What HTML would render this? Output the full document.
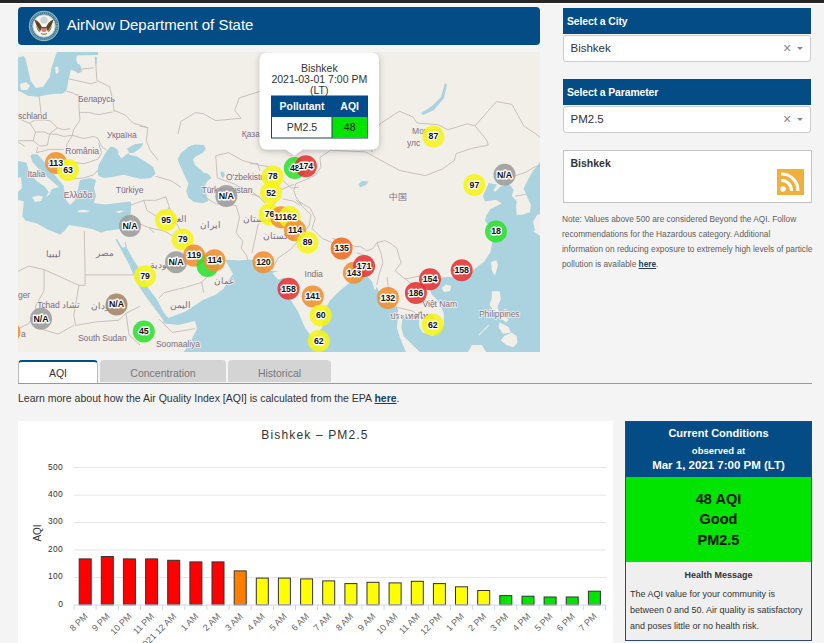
<!DOCTYPE html>
<html><head><meta charset="utf-8">
<style>
*{box-sizing:border-box;margin:0;padding:0}
html,body{width:824px;height:643px;overflow:hidden;background:#f4f4f4;font-family:"Liberation Sans",sans-serif;color:#333;position:relative}
.abs{position:absolute}
#topbar{left:0;top:0;width:824px;height:3px;background:#262626;border-bottom:1px solid #fff;box-sizing:content-box}
#hdr{left:18px;top:7px;width:522px;height:38px;background:#034c86;border-radius:4px}
#hdr .t{position:absolute;left:48.7px;top:9px;font-size:15px;line-height:17px;color:#fff;white-space:nowrap}
#map{left:18px;top:52px;width:522px;height:300px;overflow:hidden;background:#f2efe9}
.sh{left:563px;width:248px;height:26px;background:#034c86;color:#fff;font-weight:bold;font-size:10.4px;line-height:28px;padding-left:4px;letter-spacing:-0.1px}
.sel{left:563px;width:248px;height:27px;background:#fff;border:1px solid #ccc;border-radius:3px;font-size:11.5px;line-height:25px;padding-left:6.5px;color:#333}
.sel .x{position:absolute;left:219px;top:0;font-size:14px;color:#888;line-height:24px}
.sel .ar{position:absolute;left:232.5px;top:11px;width:0;height:0;border-left:3.5px solid transparent;border-right:3.5px solid transparent;border-top:3.5px solid #888}
#note{left:563px;top:149.5px;width:249px;height:53.5px;background:#fff;border:1px solid #c4c4c4}
#note b{position:absolute;left:6.5px;top:6.5px;font-size:10.5px;color:#333}
#rss{position:absolute;left:213px;top:18px;width:27px;height:26px;background:#efb03e}
#notetxt{left:562px;top:212px;width:270px;white-space:nowrap;font-size:8.3px;line-height:15px;color:#606060}
#notetxt a{color:#1d3f63;font-weight:bold;text-decoration:underline}
.tab{top:360px;height:24px;font-size:10.5px;line-height:24px;text-align:center;border-radius:4px 4px 0 0}
#t1{left:18px;width:80px;background:#fff;border:1px solid #bbb;border-top:2px solid #034c86;border-bottom:none;color:#333;line-height:23px}
#t2{left:100px;width:126px;height:22px;line-height:26px;background:#d4d4d4;color:#777}
#t3{left:228px;width:103px;height:22px;line-height:26px;background:#d4d4d4;color:#777}
#tabline{left:18px;top:383px;width:794px;height:1px;background:#999}
#learn{left:18px;top:392px;font-size:10.5px;line-height:12px;color:#333;white-space:nowrap}
#learn a{color:#1d3f63;font-weight:bold;text-decoration:underline}
#chart{left:18px;top:421px;width:595px;height:222px;background:#fff}
#cc{left:625px;top:421px;width:187px;height:220px;border:1px solid #2a4a6e;background:#efefef}
#cch{position:absolute;left:0;top:0;width:185px;height:55px;background:#034c86;color:#fff;font-weight:bold;text-align:center}
#ccg{position:absolute;left:0;top:55px;width:185px;height:85px;background:#00e400;color:#111;font-weight:bold;text-align:center;font-size:14.5px;line-height:20.6px;padding-top:11.8px}
#ccm{position:absolute;left:0;top:140px;width:185px;height:80px;color:#333}
</style></head><body>
<div id="topbar" class="abs"></div>
<div id="hdr" class="abs">
 <svg class="abs" style="left:10px;top:3px" width="32" height="32" viewBox="0 0 32 32">
  <circle cx="16" cy="16" r="14.6" fill="#46769a" stroke="#86bdb6" stroke-width="1.1"/>
  <circle cx="16" cy="16" r="13" fill="none" stroke="#a9c6d2" stroke-width="1.3" stroke-dasharray="0.9 1.1" opacity="0.75"/>
  <circle cx="16" cy="16" r="11.3" fill="#f4f3ec" stroke="#9ccbc2" stroke-width="0.8"/>
  <circle cx="16" cy="10.2" r="3.6" fill="#c9d3d3"/>
  <path d="M6.5 9.5 Q9 10 11.5 13 L14 17 L12.5 21 Q8.5 17.5 6.5 9.5Z M25.5 9.5 Q23 10 20.5 13 L18 17 L19.5 21 Q23.5 17.5 25.5 9.5Z" fill="#5f4324"/>
  <path d="M8 15 Q9.5 19 12.5 21 L11 22 Q8.5 19.5 8 15Z M24 15 Q22.5 19 19.5 21 L21 22 Q23.5 19.5 24 15Z" fill="#7a8048"/>
  <circle cx="16" cy="15" r="1.5" fill="#fff"/>
  <path d="M13.4 17 h5.2 v3.6 q-2.6 3.2 -5.2 0z" fill="#d9777a"/>
  <path d="M13.4 17 h5.2 v1.2 h-5.2z" fill="#3c4f7c"/>
  <path d="M13 23.5 Q16 25.5 19 23.5" stroke="#8a6a3a" stroke-width="1" fill="none"/>
 </svg>
 <div class="t">AirNow Department of State</div>
</div>
<div id="map" class="abs"><svg width="522" height="300" viewBox="18 52 522 300" style="display:block">
<rect x="18" y="52" width="522" height="300" fill="#f2efe9"/>
<polygon points="18.0,57.8 23.8,55.9 25.8,59.8 29.6,76.3 30.6,81.1 36.0,88.0 43.2,86.7 49.6,77.2 51.5,67.8 56.8,52.0 98.0,52.0 98.0,55.0 77.0,55.5 76.0,60.0 78.0,64.0 80.1,64.6 82.0,71.4 78.2,73.4 75.3,71.4 71.0,69.5 68.5,79.2 67.5,86.0 66.5,90.8 62.7,93.7 56.8,93.7 47.1,94.7 37.4,96.7 27.7,95.7 22.9,92.8 18.0,90.8" fill="#aad3df"/>
<polygon points="95.5,57.8 97.0,57.0 96.8,64.0 95.6,64.0" fill="#aad3df"/>
<polygon points="18.0,161.0 26.4,162.6 29.2,172.4 36.2,180.8 44.6,186.4 48.8,192.0 46.0,197.0 49.0,195.0 52.0,189.0 59.0,187.0 63.0,186.0 65.0,192.0 66.0,200.0 70.0,205.0 75.0,200.0 77.0,193.0 80.0,180.0 90.0,178.0 96.0,180.0 94.0,188.0 96.0,196.0 93.7,203.1 105.4,204.6 117.0,203.1 130.1,201.6 131.3,202.7 130.5,216.4 124.5,222.4 118.5,229.2 105.7,231.0 101.4,232.7 92.8,229.2 84.3,227.5 69.0,225.0 64.6,230.8 60.2,234.4 47.1,229.3 36.9,223.5 25.3,220.6 22.4,216.2 23.8,201.6 18.0,200.0" fill="#aad3df"/>
<polygon points="32.0,154.2 37.6,154.2 46.0,164.0 57.2,178.0 64.2,186.4 61.4,189.2 51.6,180.8 40.4,171.0 32.0,161.2 30.6,155.6" fill="#aad3df"/>
<polygon points="97.5,171.5 98.6,165.0 101.8,159.5 106.2,151.8 110.6,146.4 115.0,147.5 118.2,150.8 118.2,154.0 121.5,158.4 125.9,155.1 128.1,152.9 130.2,155.1 136.8,156.2 145.5,161.7 153.2,167.1 155.4,173.7 151.0,178.1 141.2,179.1 132.4,177.0 123.7,174.8 112.8,177.0 104.0,178.1 98.6,175.9" fill="#aad3df"/>
<polygon points="127.0,148.6 134.6,144.2 143.3,143.1 141.2,147.5 133.5,152.9 129.1,152.9" fill="#aad3df"/>
<polygon points="188.5,146.5 195.0,144.4 203.8,144.9 205.9,148.7 202.7,153.1 196.1,156.3 192.9,159.6 195.0,165.0 200.5,169.4 203.8,172.7 208.1,173.8 211.4,178.1 207.0,181.4 204.8,185.7 205.9,192.3 208.1,201.0 202.7,203.2 194.0,202.1 188.5,197.7 186.3,191.2 188.5,183.6 184.2,174.8 180.9,167.2 177.6,159.6 180.9,153.1 185.2,149.8" fill="#aad3df"/>
<polygon points="120.3,248.3 126.2,246.8 133.6,260.1 142.5,273.4 148.4,288.2 157.3,300.0 163.2,311.8 169.1,319.2 175.0,320.7 175.0,324.0 164.7,323.6 161.7,317.7 152.8,305.9 144.0,294.1 136.6,282.3 129.2,264.5" fill="#aad3df"/>
<polygon points="115.5,239.5 117.0,239.0 122.5,248.0 120.3,248.3" fill="#aad3df"/>
<polygon points="124.6,242.0 125.6,242.0 127.0,247.0 125.8,247.5" fill="#aad3df"/>
<polygon points="186.0,243.0 192.0,246.0 200.0,251.0 210.0,254.0 218.0,256.0 224.0,259.0 222.0,262.0 214.0,263.0 206.0,265.0 199.0,261.0 193.0,255.0 188.0,249.0" fill="#aad3df"/>
<polygon points="162.8,323.0 178.0,324.9 195.0,321.1 197.0,328.7 189.3,343.9 183.7,352.0 540.0,352.0 540.0,162.0 536.0,167.4 533.5,169.9 528.6,178.6 523.6,188.6 527.3,197.3 531.0,204.7 529.8,212.2 522.3,214.7 516.7,214.7 516.1,207.2 516.7,201.0 511.8,196.0 513.6,189.8 508.7,183.6 500.0,187.0 495.0,192.0 493.5,190.0 497.0,184.5 488.7,183.0 483.0,196.0 484.9,201.6 496.1,199.7 501.7,203.5 490.5,209.0 486.8,214.7 484.9,220.3 488.7,225.9 492.4,240.8 490.5,252.0 484.0,261.8 475.3,268.3 471.0,273.0 460.0,279.0 451.4,277.0 446.0,277.0 440.5,278.0 432.0,283.0 429.6,290.0 431.8,294.4 438.3,301.0 443.9,313.6 443.9,324.8 441.6,328.1 432.7,336.0 422.6,332.6 419.3,327.0 419.0,318.0 410.0,318.0 402.5,318.0 401.3,327.0 403.6,336.0 412.5,344.9 420.0,352.0 406.0,352.0 400.2,338.2 396.9,328.1 398.0,317.0 396.9,306.9 384.0,302.0 376.7,286.7 374.8,290.7 372.0,281.2 366.2,275.5 356.8,277.4 349.2,283.1 339.7,290.7 330.2,300.2 324.5,309.7 322.6,326.8 315.0,336.5 311.2,336.2 305.5,328.7 298.0,311.6 288.5,296.4 284.0,286.0 284.7,277.4 278.3,279.8 272.4,273.0 278.3,271.0 274.4,271.0 266.0,270.0 258.0,262.0 252.0,259.4 239.4,260.4 224.9,259.4 233.0,273.7 229.2,279.3 223.5,288.8 215.9,294.5 202.6,300.2 185.5,311.6 164.7,319.2" fill="#aad3df"/>
<polygon points="358.5,184.0 362.0,181.0 368.7,181.5 366.0,185.0 360.0,187.6" fill="#aad3df"/>
<polygon points="220.5,172.0 223.0,171.5 225.0,175.0 223.0,177.9 221.0,176.0" fill="#aad3df"/>
<polygon points="306.0,166.0 311.0,165.0 312.0,167.0 307.0,168.0" fill="#aad3df"/>
<polygon points="445.0,83.0 447.0,85.0 444.0,98.0 434.0,110.0 423.0,115.0 421.0,113.0 432.0,106.0 441.0,97.0" fill="#aad3df"/>
<polygon points="20.0,84.0 26.0,82.0 30.0,86.0 27.0,90.0 21.0,90.0" fill="#f2efe9"/>
<polygon points="55.0,67.0 58.0,66.6 58.8,72.0 56.0,74.3" fill="#f2efe9"/>
<polygon points="32.0,197.0 38.0,195.5 43.0,196.5 41.0,201.0 35.0,202.0" fill="#f2efe9"/>
<polygon points="77.7,210.5 84.0,209.7 90.8,211.0 84.0,212.6 78.0,212.0" fill="#f2efe9"/>
<polygon points="115.6,211.5 121.0,210.4 124.3,211.0 119.0,213.3" fill="#f2efe9"/>
<polygon points="18.0,178.0 21.0,177.0 22.0,188.0 18.0,192.0" fill="#f2efe9"/>
<polygon points="491.0,262.0 496.5,260.3 498.0,265.0 495.0,275.4 492.0,271.0" fill="#f2efe9"/>
<polygon points="491.8,291.2 499.7,291.2 500.8,299.1 497.4,306.9 499.7,313.6 504.1,317.0 508.6,319.2 506.4,322.6 497.4,315.9 492.9,310.3 489.6,304.7 491.8,298.0" fill="#f2efe9"/>
<polygon points="499.7,322.6 508.6,327.1 510.9,332.7 503.0,333.8 498.5,327.1" fill="#f2efe9"/>
<polygon points="504.1,336.0 512.0,332.7 516.5,336.0 517.6,342.8 513.1,347.2 506.4,345.0 500.8,340.5" fill="#f2efe9"/>
<polygon points="488.4,324.8 478.4,334.9 479.2,335.6 489.0,325.6" fill="#f2efe9"/>
<polygon points="468.0,352.0 472.0,345.0 481.7,345.0 486.2,352.0" fill="#f2efe9"/>
<polygon points="441.6,288.0 446.0,284.6 451.4,286.0 450.0,291.0 444.0,292.2" fill="#f2efe9"/>
<polygon points="316.0,337.0 320.0,336.0 323.0,342.0 321.0,348.0 317.0,346.0" fill="#f2efe9"/>
<polygon points="533.0,222.0 537.0,215.0 540.0,214.0 540.0,232.0 535.0,230.0" fill="#f2efe9"/>
<polygon points="533.0,231.0 540.0,229.0 540.0,236.0" fill="#f2efe9"/>
<g fill="none" stroke="#c3baba" stroke-width="0.9" stroke-linejoin="round">
<polyline points="329.7,150.9 319.9,157.5 321.0,167.3 315.5,175.0 306.8,179.3 295.9,183.7 293.7,190.2 295.9,196.8 301.3,204.4"/>
<polyline points="250.0,163.9 257.6,163.5 259.8,170.6"/>
<polyline points="282.8,180.4 291.5,188.1 299.1,187.0"/>
<polyline points="282.8,199.0 293.7,201.2 300.2,205.5"/>
<polyline points="250.0,190.2 258.7,196.8 265.3,203.3"/>
<polyline points="300.0,202.1 310.1,208.2 315.2,218.3 312.1,228.4 322.2,238.5 332.4,242.6"/>
<polyline points="332.4,238.5 342.5,240.6 354.6,246.6 360.7,246.6"/>
<polyline points="360.7,246.6 366.7,250.7 372.8,248.7 376.9,242.6 385.0,240.6 391.0,243.6 397.1,248.7 399.1,256.7 401.1,262.8 395.1,270.9 405.2,279.0"/>
<polyline points="356.6,252.7 368.8,256.7 374.8,264.8 372.8,272.9"/>
<polyline points="376.9,242.6 380.9,252.7 382.9,262.8 378.9,274.9 376.9,285.1"/>
<polyline points="387.0,277.0 389.0,293.2 395.1,303.3 398.0,312.0"/>
<polyline points="405.2,279.0 413.3,285.1 421.4,295.2 429.4,307.3"/>
<polyline points="397.1,307.3 413.3,311.3 420.0,318.0"/>
<polyline points="405.2,279.0 420.0,276.0 432.0,283.0"/>
<polyline points="35.4,313.2 28.5,323.7 18.0,328.9"/>
<polyline points="37.0,320.0 40.7,328.9 58.1,334.1 73.8,325.4"/>
<polyline points="130.0,205.4 143.7,200.3 155.7,200.3 165.9,196.8"/>
<polyline points="165.9,196.8 169.3,207.1 174.5,219.1 179.6,229.3 183.0,234.5 188.0,243.0"/>
<polyline points="143.7,200.3 147.1,210.5 160.8,219.1 169.3,207.1"/>
<polyline points="131.0,214.0 140.3,224.2 148.8,227.6 154.0,232.8"/>
<polyline points="148.8,227.6 164.2,231.1 176.2,237.9 186.0,243.0"/>
<polyline points="201.8,195.1 215.5,203.7 236.1,205.4"/>
<polyline points="236.1,205.4 239.5,217.4 236.1,232.8 242.9,241.3 241.2,248.2"/>
<polyline points="241.2,248.2 246.3,255.0 248.0,260.1"/>
<polyline points="159.0,298.0 164.2,292.6 184.7,287.5 201.8,282.4"/>
<polyline points="201.8,282.4 203.6,292.6"/>
<polyline points="201.8,282.4 212.1,272.1 218.0,262.0"/>
<polyline points="38.7,95.0 39.8,101.5 40.9,113.5 45.2,120.0"/>
<polyline points="30.0,123.3 34.3,120.0 45.2,120.0 50.7,121.1 57.2,127.7 63.7,129.8 70.2,128.7"/>
<polyline points="30.0,123.3 35.4,132.0 44.1,132.0 49.6,134.2 57.2,127.7"/>
<polyline points="49.6,134.2 56.1,134.2 63.7,136.4 72.4,135.3"/>
<polyline points="76.4,94.6 79.0,95.0 79.0,108.1 80.0,120.0 73.5,129.8 72.4,135.3"/>
<polyline points="79.0,112.4 88.7,112.4 98.0,114.6 112.7,112.0"/>
<polyline points="72.4,135.3 67.0,144.0 65.9,151.6"/>
<polyline points="72.4,135.3 83.3,138.5 94.2,136.4 98.0,138.5 101.6,146.7 106.4,149.8"/>
<polyline points="18.0,140.7 33.2,140.7 39.8,146.2 47.4,145.1 49.6,134.2"/>
<polyline points="33.2,140.7 35.4,132.0"/>
<polyline points="37.6,147.2 36.5,152.7 49.6,149.4 63.7,149.4"/>
<polyline points="18.0,141.8 24.5,146.2"/>
<polyline points="18.0,118.0 24.0,121.0 30.0,123.3"/>
<polyline points="66.9,91.4 73.2,93.0 78.0,96.2"/>
<polyline points="68.5,78.8 90.6,83.6 96.9,82.0"/>
<polyline points="78.0,69.4 93.7,67.8"/>
<polyline points="95.3,56.7 96.9,80.4 109.5,86.7"/>
<polyline points="109.5,86.7 112.7,99.3 114.2,112.0"/>
<polyline points="114.2,110.4 125.3,115.1 133.2,123.0 148.0,127.7"/>
<polyline points="98.5,143.2 101.6,152.6 98.5,158.9 84.3,163.7 70.0,162.1 60.0,168.0"/>
<polyline points="65.3,179.4 84.3,177.9 93.7,174.7 98.0,170.0"/>
<polyline points="177.9,134.0 181.0,121.4 195.2,112.7 203.1,113.5 215.7,120.6 233.1,119.0 241.0,118.3 234.7,110.4 239.4,97.8 259.9,91.4"/>
<polyline points="140.0,126.2 147.9,127.7 146.3,140.4 150.0,150.0 158.0,160.0"/>
<polyline points="215.7,155.8 228.4,152.6 242.6,160.5 259.9,165.2 270.0,166.8"/>
<polyline points="215.7,155.8 217.3,177.9"/>
<polyline points="217.3,177.9 234.7,184.2 250.4,193.6 259.9,196.8"/>
<polyline points="155.8,176.3 171.6,181.0 181.0,187.3"/>
<polyline points="84.3,231.0 85.1,274.9"/>
<polyline points="85.1,274.9 133.0,274.9"/>
<polyline points="85.1,274.9 85.1,285.3 79.0,285.3 73.8,314.9 75.5,325.4"/>
<polyline points="79.0,285.3 44.1,269.6 28.5,266.1 18.0,271.4"/>
<polyline points="44.1,269.6 44.1,290.5 35.4,306.2 37.0,320.0"/>
<polyline points="75.5,325.4 96.4,321.9 119.1,320.2 126.0,313.2 140.0,306.2"/>
<polyline points="126.0,313.2 129.0,335.0 140.0,345.0"/>
<polyline points="159.0,319.2 172.3,332.5 195.0,328.7"/>
<polyline points="329.7,150.2 365.3,151.9 387.4,163.8 400.0,170.6"/>
<polyline points="260.0,179.1 282.1,189.3 294.0,184.2"/>
<polyline points="277.0,189.3 275.3,202.9 265.1,214.8 258.0,225.0 252.0,252.8"/>
<polyline points="295.7,199.5 311.0,214.8 309.3,225.0 299.1,240.0 290.0,250.0 278.0,258.0 272.0,270.0"/>
<polyline points="380.0,123.8 399.4,111.2 413.0,117.0 416.9,122.9 438.3,124.8 448.0,129.7 467.4,123.8 475.1,125.8 488.7,110.3 496.5,101.5 512.0,104.4 523.7,125.8 535.3,133.6 540.0,137.4"/>
<polyline points="380.0,123.8 370.0,140.0 372.0,152.0"/>
<polyline points="400.0,170.6 425.5,175.7 442.5,168.9 454.4,160.4 456.1,153.6 471.4,148.5 488.3,145.1 486.6,140.0 475.1,125.8"/>
<polyline points="510.4,177.4 525.7,172.3 534.2,167.2 540.0,165.5"/>
<polyline points="515.5,196.1 525.7,194.4"/>
</g>
<g font-family="Liberation Sans" font-size="8.5" fill="#7b6d84" letter-spacing="-0.05" stroke="#f2efe9" stroke-width="1.6" paint-order="stroke">
<text x="78" y="101.9">Беларусь</text>
<text x="18" y="118.6">schland</text>
<text x="107" y="138.2">Україна</text>
<text x="65.3" y="153.6">România</text>
<text x="27.5" y="176.6">Italia</text>
<text x="63.8" y="197.8">Ελλάδα</text>
<text x="115.8" y="193.1">Türkiye</text>
<text x="226" y="179.6">O'zbekiston</text>
<text x="201.5" y="193.1">Türkmenistan</text>
<text x="162" y="222.3">العراق</text>
<text x="200" y="227.8">ایران</text>
<text x="242.6" y="221.5">افغانستان</text>
<text x="45.9" y="257.4">ليبيا</text>
<text x="96.4" y="255.6">مصر</text>
<text x="18" y="298.4">ger</text>
<text x="21" y="336.6">a</text>
<text x="37.2" y="308.0">Tchad تشاد</text>
<text x="91.2" y="308.8">السودان</text>
<text x="78" y="341.1">South Sudan</text>
<text x="150.4" y="267.7">السعودية</text>
<text x="214" y="283.8">عمان</text>
<text x="170.4" y="307.6">اليمن</text>
<text x="156" y="347.4">Soomaaliya</text>
<text x="389" y="200.4">中国</text>
<text x="263.4" y="238.6">پاکستان</text>
<text x="304.6" y="276.6">India</text>
<text x="422.6" y="306.6">Việt Nam</text>
<text x="390" y="319.0">ประเทศไทย</text>
<text x="479" y="317.4">Philippines</text>
<text x="412" y="134.2">Монгол</text>
<text x="407" y="145.9">улс</text>
<text x="241.8" y="137.4">Қаза</text>
</g>
<g font-family="Liberation Sans" font-weight="bold" font-size="9.8" letter-spacing="-0.1" text-anchor="middle">
<circle cx="9.5" cy="332" r="11" fill="#f09030" fill-opacity="0.88"/>
<circle cx="41" cy="318.7" r="11" fill="#9c9c9c" fill-opacity="0.88"/>
<circle cx="116.5" cy="304.5" r="11" fill="#a48466" fill-opacity="0.88"/>
<circle cx="143.8" cy="331.5" r="11" fill="#2fe02f" fill-opacity="0.88"/>
<circle cx="145" cy="276.3" r="11" fill="#f5f514" fill-opacity="0.88"/>
<circle cx="56" cy="163" r="11" fill="#f09030" fill-opacity="0.88"/>
<circle cx="68" cy="170" r="11" fill="#f5f514" fill-opacity="0.88"/>
<circle cx="130" cy="226" r="11" fill="#9c9c9c" fill-opacity="0.88"/>
<circle cx="166" cy="220" r="11" fill="#f5f514" fill-opacity="0.88"/>
<circle cx="182.7" cy="239.5" r="11" fill="#f5f514" fill-opacity="0.88"/>
<circle cx="176" cy="262.3" r="11" fill="#9c9c9c" fill-opacity="0.88"/>
<circle cx="194.1" cy="255.6" r="11" fill="#f09030" fill-opacity="0.88"/>
<circle cx="207.6" cy="266" r="11" fill="#2fe02f" fill-opacity="0.88"/>
<circle cx="214.5" cy="260.2" r="11" fill="#f09030" fill-opacity="0.88"/>
<circle cx="226.3" cy="196" r="11" fill="#9c9c9c" fill-opacity="0.88"/>
<circle cx="263.4" cy="262.3" r="11" fill="#f09030" fill-opacity="0.88"/>
<circle cx="272.7" cy="176.5" r="11" fill="#f5f514" fill-opacity="0.88"/>
<circle cx="271" cy="192.7" r="11" fill="#f5f514" fill-opacity="0.88"/>
<circle cx="269.5" cy="214.5" r="11" fill="#f5f514" fill-opacity="0.88"/>
<circle cx="281.2" cy="217.3" r="11" fill="#f09030" fill-opacity="0.88"/>
<circle cx="289.5" cy="217" r="11" fill="#f5f514" fill-opacity="0.88"/>
<circle cx="295" cy="230.3" r="11" fill="#f09030" fill-opacity="0.88"/>
<circle cx="307.5" cy="242.5" r="11" fill="#f5f514" fill-opacity="0.88"/>
<circle cx="294.8" cy="168" r="11" fill="#2fe02f" fill-opacity="0.88"/>
<circle cx="305.9" cy="166.3" r="11" fill="#e63232" fill-opacity="0.88"/>
<circle cx="341.6" cy="248.4" r="11" fill="#f26a1a" fill-opacity="0.88"/>
<circle cx="353.9" cy="272.7" r="11" fill="#f09030" fill-opacity="0.88"/>
<circle cx="364" cy="266" r="11" fill="#e63232" fill-opacity="0.88"/>
<circle cx="288.5" cy="288.8" r="11" fill="#e63232" fill-opacity="0.88"/>
<circle cx="312.7" cy="296.4" r="11" fill="#f09030" fill-opacity="0.88"/>
<circle cx="320.7" cy="315.4" r="11" fill="#f5f514" fill-opacity="0.88"/>
<circle cx="318.8" cy="341" r="11" fill="#f5f514" fill-opacity="0.88"/>
<circle cx="387.9" cy="297.9" r="11" fill="#f09030" fill-opacity="0.88"/>
<circle cx="415.9" cy="292.9" r="11" fill="#e63232" fill-opacity="0.88"/>
<circle cx="430" cy="279.3" r="11" fill="#e63232" fill-opacity="0.88"/>
<circle cx="432.7" cy="324.8" r="11" fill="#f5f514" fill-opacity="0.88"/>
<circle cx="461.7" cy="270.2" r="11" fill="#e63232" fill-opacity="0.88"/>
<circle cx="474.4" cy="185" r="11" fill="#f5f514" fill-opacity="0.88"/>
<circle cx="504.5" cy="174.8" r="11" fill="#9c9c9c" fill-opacity="0.88"/>
<circle cx="496" cy="231.5" r="11" fill="#2fe02f" fill-opacity="0.88"/>
<circle cx="433.4" cy="136.5" r="11" fill="#f5f514" fill-opacity="0.88"/>
<text transform="translate(41 321.5) scale(0.9 1)" fill="#111" stroke="#fff" stroke-width="2.8" stroke-linejoin="round" paint-order="stroke">N/A</text>
<text transform="translate(116.5 307.3) scale(0.9 1)" fill="#111" stroke="#fff" stroke-width="2.8" stroke-linejoin="round" paint-order="stroke">N/A</text>
<text transform="translate(143.8 334.3) scale(0.9 1)" fill="#111" stroke="#fff" stroke-width="2.8" stroke-linejoin="round" paint-order="stroke">45</text>
<text transform="translate(145 279.1) scale(0.9 1)" fill="#111" stroke="#fff" stroke-width="2.8" stroke-linejoin="round" paint-order="stroke">79</text>
<text transform="translate(56 165.8) scale(0.9 1)" fill="#111" stroke="#fff" stroke-width="2.8" stroke-linejoin="round" paint-order="stroke">113</text>
<text transform="translate(68 172.8) scale(0.9 1)" fill="#111" stroke="#fff" stroke-width="2.8" stroke-linejoin="round" paint-order="stroke">63</text>
<text transform="translate(130 228.8) scale(0.9 1)" fill="#111" stroke="#fff" stroke-width="2.8" stroke-linejoin="round" paint-order="stroke">N/A</text>
<text transform="translate(166 222.8) scale(0.9 1)" fill="#111" stroke="#fff" stroke-width="2.8" stroke-linejoin="round" paint-order="stroke">95</text>
<text transform="translate(182.7 242.3) scale(0.9 1)" fill="#111" stroke="#fff" stroke-width="2.8" stroke-linejoin="round" paint-order="stroke">79</text>
<text transform="translate(176 265.1) scale(0.9 1)" fill="#111" stroke="#fff" stroke-width="2.8" stroke-linejoin="round" paint-order="stroke">N/A</text>
<text transform="translate(194.1 258.4) scale(0.9 1)" fill="#111" stroke="#fff" stroke-width="2.8" stroke-linejoin="round" paint-order="stroke">119</text>
<text transform="translate(214.5 263.0) scale(0.9 1)" fill="#111" stroke="#fff" stroke-width="2.8" stroke-linejoin="round" paint-order="stroke">114</text>
<text transform="translate(226.3 198.8) scale(0.9 1)" fill="#111" stroke="#fff" stroke-width="2.8" stroke-linejoin="round" paint-order="stroke">N/A</text>
<text transform="translate(263.4 265.1) scale(0.9 1)" fill="#111" stroke="#fff" stroke-width="2.8" stroke-linejoin="round" paint-order="stroke">120</text>
<text transform="translate(272.7 179.3) scale(0.9 1)" fill="#111" stroke="#fff" stroke-width="2.8" stroke-linejoin="round" paint-order="stroke">78</text>
<text transform="translate(271 195.5) scale(0.9 1)" fill="#111" stroke="#fff" stroke-width="2.8" stroke-linejoin="round" paint-order="stroke">52</text>
<text transform="translate(269.5 217.3) scale(0.9 1)" fill="#111" stroke="#fff" stroke-width="2.8" stroke-linejoin="round" paint-order="stroke">76</text>
<text transform="translate(281.2 220.1) scale(0.9 1)" fill="#111" stroke="#fff" stroke-width="2.8" stroke-linejoin="round" paint-order="stroke">116</text>
<text transform="translate(289.5 219.8) scale(0.9 1)" fill="#111" stroke="#fff" stroke-width="2.8" stroke-linejoin="round" paint-order="stroke">162</text>
<text transform="translate(295 233.1) scale(0.9 1)" fill="#111" stroke="#fff" stroke-width="2.8" stroke-linejoin="round" paint-order="stroke">114</text>
<text transform="translate(307.5 245.3) scale(0.9 1)" fill="#111" stroke="#fff" stroke-width="2.8" stroke-linejoin="round" paint-order="stroke">89</text>
<text transform="translate(294.8 170.8) scale(0.9 1)" fill="#111" stroke="#fff" stroke-width="2.8" stroke-linejoin="round" paint-order="stroke">48</text>
<text transform="translate(305.9 169.1) scale(0.9 1)" fill="#111" stroke="#fff" stroke-width="2.8" stroke-linejoin="round" paint-order="stroke">174</text>
<text transform="translate(341.6 251.2) scale(0.9 1)" fill="#111" stroke="#fff" stroke-width="2.8" stroke-linejoin="round" paint-order="stroke">135</text>
<text transform="translate(353.9 275.5) scale(0.9 1)" fill="#111" stroke="#fff" stroke-width="2.8" stroke-linejoin="round" paint-order="stroke">143</text>
<text transform="translate(364 268.8) scale(0.9 1)" fill="#111" stroke="#fff" stroke-width="2.8" stroke-linejoin="round" paint-order="stroke">171</text>
<text transform="translate(288.5 291.6) scale(0.9 1)" fill="#111" stroke="#fff" stroke-width="2.8" stroke-linejoin="round" paint-order="stroke">158</text>
<text transform="translate(312.7 299.2) scale(0.9 1)" fill="#111" stroke="#fff" stroke-width="2.8" stroke-linejoin="round" paint-order="stroke">141</text>
<text transform="translate(320.7 318.2) scale(0.9 1)" fill="#111" stroke="#fff" stroke-width="2.8" stroke-linejoin="round" paint-order="stroke">60</text>
<text transform="translate(318.8 343.8) scale(0.9 1)" fill="#111" stroke="#fff" stroke-width="2.8" stroke-linejoin="round" paint-order="stroke">62</text>
<text transform="translate(387.9 300.7) scale(0.9 1)" fill="#111" stroke="#fff" stroke-width="2.8" stroke-linejoin="round" paint-order="stroke">132</text>
<text transform="translate(415.9 295.7) scale(0.9 1)" fill="#111" stroke="#fff" stroke-width="2.8" stroke-linejoin="round" paint-order="stroke">186</text>
<text transform="translate(430 282.1) scale(0.9 1)" fill="#111" stroke="#fff" stroke-width="2.8" stroke-linejoin="round" paint-order="stroke">154</text>
<text transform="translate(432.7 327.6) scale(0.9 1)" fill="#111" stroke="#fff" stroke-width="2.8" stroke-linejoin="round" paint-order="stroke">62</text>
<text transform="translate(461.7 273.0) scale(0.9 1)" fill="#111" stroke="#fff" stroke-width="2.8" stroke-linejoin="round" paint-order="stroke">158</text>
<text transform="translate(474.4 187.8) scale(0.9 1)" fill="#111" stroke="#fff" stroke-width="2.8" stroke-linejoin="round" paint-order="stroke">97</text>
<text transform="translate(504.5 177.6) scale(0.9 1)" fill="#111" stroke="#fff" stroke-width="2.8" stroke-linejoin="round" paint-order="stroke">N/A</text>
<text transform="translate(496 234.3) scale(0.9 1)" fill="#111" stroke="#fff" stroke-width="2.8" stroke-linejoin="round" paint-order="stroke">18</text>
<text transform="translate(433.4 139.3) scale(0.9 1)" fill="#111" stroke="#fff" stroke-width="2.8" stroke-linejoin="round" paint-order="stroke">87</text>
</g>
<g font-family="Liberation Sans">
<defs><filter id="sh" x="-20%" y="-20%" width="140%" height="140%"><feDropShadow dx="0" dy="1.5" stdDeviation="3" flood-color="#000" flood-opacity="0.25"/></filter></defs>
<path filter="url(#sh)" d="M267.7,52.5 H371 Q379,52.5 379,60.5 V141.5 Q379,149.5 371,149.5 H302.5 L294.2,155.5 L286,149.5 H267.7 Q259.7,149.5 259.7,141.5 V60.5 Q259.7,52.5 267.7,52.5Z" fill="#fff"/>
<g font-size="10.5" text-anchor="middle" fill="#333"><text x="319.3" y="71.5">Bishkek</text><text x="319.3" y="82.9">2021-03-01 7:00 PM</text><text x="319.3" y="93.6">(LT)</text></g>
<rect x="271.5" y="96" width="96" height="42" fill="#fff" stroke="#1b3f6a" stroke-width="1"/>
<rect x="271.5" y="96" width="96" height="21" fill="#034b8b"/>
<rect x="332" y="117" width="35.5" height="21" fill="#00e400"/>
<line x1="332" y1="117" x2="332" y2="138" stroke="#1b3f6a"/>
<g font-size="10.5" text-anchor="middle"><text x="302" y="109.7" fill="#fff" font-weight="bold">Pollutant</text><text x="349.7" y="109.7" fill="#fff" font-weight="bold">AQI</text>
<text x="302" y="130.8" fill="#333">PM2.5</text><text x="349.7" y="130.8" fill="#111">48</text></g>
</g>
</svg></div>

<div class="abs sh" style="top:8px">Select a City</div>
<div class="abs sel" style="top:35px">Bishkek<span class="x">×</span><span class="ar"></span></div>
<div class="abs sh" style="top:79px">Select a Parameter</div>
<div class="abs sel" style="top:106px">PM2.5<span class="x">×</span><span class="ar"></span></div>
<div id="note" class="abs"><b>Bishkek</b>
 <div id="rss"><svg width="27" height="26" viewBox="0 0 27 26"><circle cx="6" cy="20" r="2.8" fill="#fff"/><path d="M4 11.5 A10 10 0 0 1 14.5 22" stroke="#fff" stroke-width="3" fill="none"/><path d="M4 5 A16.5 16.5 0 0 1 21 22" stroke="#fff" stroke-width="3" fill="none"/></svg></div>
</div>
<div id="notetxt" class="abs">Note: Values above 500 are considered Beyond the AQI. Follow<br>recommendations for the Hazardous category. Additional<br>information on reducing exposure to extremely high levels of particle<br>pollution is available <a>here</a>.</div>

<div id="t1" class="abs tab">AQI</div>
<div id="t2" class="abs tab">Concentration</div>
<div id="t3" class="abs tab">Historical</div>
<div id="tabline" class="abs"></div>
<div id="learn" class="abs">Learn more about how the Air Quality Index [AQI] is calculated from the EPA <a>here</a>.</div>

<div id="chart" class="abs"><svg width="595" height="222" viewBox="18 421 595 222" style="display:block">
<line x1="74" y1="577.4" x2="606" y2="577.4" stroke="#e6e6e6" stroke-width="1"/>
<line x1="74" y1="550.0" x2="606" y2="550.0" stroke="#e6e6e6" stroke-width="1"/>
<line x1="74" y1="522.5" x2="606" y2="522.5" stroke="#e6e6e6" stroke-width="1"/>
<line x1="74" y1="495.1" x2="606" y2="495.1" stroke="#e6e6e6" stroke-width="1"/>
<line x1="74" y1="467.6" x2="606" y2="467.6" stroke="#e6e6e6" stroke-width="1"/>
<g font-family="Liberation Sans" font-size="8.4" letter-spacing="0.4" fill="#333" text-anchor="end">
<text x="63.2" y="606.8">0</text>
<text x="63.2" y="579.3">100</text>
<text x="63.2" y="551.9">200</text>
<text x="63.2" y="524.4">300</text>
<text x="63.2" y="497.0">400</text>
<text x="63.2" y="469.5">500</text>
</g>
<rect x="79.2" y="558.9" width="12" height="46.0" fill="#ff0000" stroke="#333" stroke-width="1"/>
<rect x="101.3" y="556.5" width="12" height="48.4" fill="#ff0000" stroke="#333" stroke-width="1"/>
<rect x="123.4" y="558.9" width="12" height="46.0" fill="#ff0000" stroke="#333" stroke-width="1"/>
<rect x="145.6" y="558.9" width="12" height="46.0" fill="#ff0000" stroke="#333" stroke-width="1"/>
<rect x="167.7" y="560.3" width="12" height="44.6" fill="#ff0000" stroke="#333" stroke-width="1"/>
<rect x="189.9" y="561.9" width="12" height="43.0" fill="#ff0000" stroke="#333" stroke-width="1"/>
<rect x="212.0" y="561.9" width="12" height="43.0" fill="#ff0000" stroke="#333" stroke-width="1"/>
<rect x="234.2" y="570.9" width="12" height="34.0" fill="#ff7e00" stroke="#333" stroke-width="1"/>
<rect x="256.3" y="578.1" width="12" height="26.8" fill="#ffff00" stroke="#333" stroke-width="1"/>
<rect x="278.4" y="578.1" width="12" height="26.8" fill="#ffff00" stroke="#333" stroke-width="1"/>
<rect x="300.6" y="578.9" width="12" height="26.0" fill="#ffff00" stroke="#333" stroke-width="1"/>
<rect x="322.7" y="580.9" width="12" height="24.0" fill="#ffff00" stroke="#333" stroke-width="1"/>
<rect x="344.9" y="583.6" width="12" height="21.3" fill="#ffff00" stroke="#333" stroke-width="1"/>
<rect x="367.0" y="582.3" width="12" height="22.6" fill="#ffff00" stroke="#333" stroke-width="1"/>
<rect x="389.1" y="582.9" width="12" height="22.0" fill="#ffff00" stroke="#333" stroke-width="1"/>
<rect x="411.3" y="581.3" width="12" height="23.6" fill="#ffff00" stroke="#333" stroke-width="1"/>
<rect x="433.4" y="583.6" width="12" height="21.3" fill="#ffff00" stroke="#333" stroke-width="1"/>
<rect x="455.5" y="586.8" width="12" height="18.1" fill="#ffff00" stroke="#333" stroke-width="1"/>
<rect x="477.7" y="590.5" width="12" height="14.4" fill="#ffff00" stroke="#333" stroke-width="1"/>
<rect x="499.8" y="595.6" width="12" height="9.3" fill="#00e400" stroke="#333" stroke-width="1"/>
<rect x="522.0" y="596.2" width="12" height="8.7" fill="#00e400" stroke="#333" stroke-width="1"/>
<rect x="544.1" y="597.0" width="12" height="7.9" fill="#00e400" stroke="#333" stroke-width="1"/>
<rect x="566.2" y="597.0" width="12" height="7.9" fill="#00e400" stroke="#333" stroke-width="1"/>
<rect x="588.4" y="591.2" width="12" height="13.7" fill="#00e400" stroke="#333" stroke-width="1"/>
<line x1="74" y1="605" x2="606" y2="605" stroke="#ccd6eb" stroke-width="1"/>
<line x1="74.1" y1="605" x2="74.1" y2="610" stroke="#ccd6eb" stroke-width="1"/>
<line x1="96.2" y1="605" x2="96.2" y2="610" stroke="#ccd6eb" stroke-width="1"/>
<line x1="118.4" y1="605" x2="118.4" y2="610" stroke="#ccd6eb" stroke-width="1"/>
<line x1="140.5" y1="605" x2="140.5" y2="610" stroke="#ccd6eb" stroke-width="1"/>
<line x1="162.7" y1="605" x2="162.7" y2="610" stroke="#ccd6eb" stroke-width="1"/>
<line x1="184.8" y1="605" x2="184.8" y2="610" stroke="#ccd6eb" stroke-width="1"/>
<line x1="206.9" y1="605" x2="206.9" y2="610" stroke="#ccd6eb" stroke-width="1"/>
<line x1="229.1" y1="605" x2="229.1" y2="610" stroke="#ccd6eb" stroke-width="1"/>
<line x1="251.2" y1="605" x2="251.2" y2="610" stroke="#ccd6eb" stroke-width="1"/>
<line x1="273.4" y1="605" x2="273.4" y2="610" stroke="#ccd6eb" stroke-width="1"/>
<line x1="295.5" y1="605" x2="295.5" y2="610" stroke="#ccd6eb" stroke-width="1"/>
<line x1="317.6" y1="605" x2="317.6" y2="610" stroke="#ccd6eb" stroke-width="1"/>
<line x1="339.8" y1="605" x2="339.8" y2="610" stroke="#ccd6eb" stroke-width="1"/>
<line x1="361.9" y1="605" x2="361.9" y2="610" stroke="#ccd6eb" stroke-width="1"/>
<line x1="384.1" y1="605" x2="384.1" y2="610" stroke="#ccd6eb" stroke-width="1"/>
<line x1="406.2" y1="605" x2="406.2" y2="610" stroke="#ccd6eb" stroke-width="1"/>
<line x1="428.3" y1="605" x2="428.3" y2="610" stroke="#ccd6eb" stroke-width="1"/>
<line x1="450.5" y1="605" x2="450.5" y2="610" stroke="#ccd6eb" stroke-width="1"/>
<line x1="472.6" y1="605" x2="472.6" y2="610" stroke="#ccd6eb" stroke-width="1"/>
<line x1="494.8" y1="605" x2="494.8" y2="610" stroke="#ccd6eb" stroke-width="1"/>
<line x1="516.9" y1="605" x2="516.9" y2="610" stroke="#ccd6eb" stroke-width="1"/>
<line x1="539.0" y1="605" x2="539.0" y2="610" stroke="#ccd6eb" stroke-width="1"/>
<line x1="561.2" y1="605" x2="561.2" y2="610" stroke="#ccd6eb" stroke-width="1"/>
<line x1="583.3" y1="605" x2="583.3" y2="610" stroke="#ccd6eb" stroke-width="1"/>
<line x1="605.5" y1="605" x2="605.5" y2="610" stroke="#ccd6eb" stroke-width="1"/>
<g font-family="Liberation Sans" font-size="9" fill="#666" text-anchor="end">
<text x="88.2" y="617" transform="rotate(-45 88.2 617)">8 PM</text>
<text x="110.3" y="617" transform="rotate(-45 110.3 617)">9 PM</text>
<text x="132.4" y="617" transform="rotate(-45 132.4 617)">10 PM</text>
<text x="154.6" y="617" transform="rotate(-45 154.6 617)">11 PM</text>
<text x="176.7" y="617" transform="rotate(-45 176.7 617)">03/01/2021 12 AM</text>
<text x="198.9" y="617" transform="rotate(-45 198.9 617)">1 AM</text>
<text x="221.0" y="617" transform="rotate(-45 221.0 617)">2 AM</text>
<text x="243.2" y="617" transform="rotate(-45 243.2 617)">3 AM</text>
<text x="265.3" y="617" transform="rotate(-45 265.3 617)">4 AM</text>
<text x="287.4" y="617" transform="rotate(-45 287.4 617)">5 AM</text>
<text x="309.6" y="617" transform="rotate(-45 309.6 617)">6 AM</text>
<text x="331.7" y="617" transform="rotate(-45 331.7 617)">7 AM</text>
<text x="353.9" y="617" transform="rotate(-45 353.9 617)">8 AM</text>
<text x="376.0" y="617" transform="rotate(-45 376.0 617)">9 AM</text>
<text x="398.1" y="617" transform="rotate(-45 398.1 617)">10 AM</text>
<text x="420.3" y="617" transform="rotate(-45 420.3 617)">11 AM</text>
<text x="442.4" y="617" transform="rotate(-45 442.4 617)">12 PM</text>
<text x="464.5" y="617" transform="rotate(-45 464.5 617)">1 PM</text>
<text x="486.7" y="617" transform="rotate(-45 486.7 617)">2 PM</text>
<text x="508.8" y="617" transform="rotate(-45 508.8 617)">3 PM</text>
<text x="531.0" y="617" transform="rotate(-45 531.0 617)">4 PM</text>
<text x="553.1" y="617" transform="rotate(-45 553.1 617)">5 PM</text>
<text x="575.2" y="617" transform="rotate(-45 575.2 617)">6 PM</text>
<text x="597.4" y="617" transform="rotate(-45 597.4 617)">7 PM</text>
</g>
<text x="315" y="438.6" font-family="Liberation Sans" font-size="12" fill="#333" text-anchor="middle" letter-spacing="1.15">Bishkek – PM2.5</text>
<text x="0" y="0" font-family="Liberation Sans" font-size="10" fill="#333" text-anchor="middle" transform="translate(40.5 533) rotate(-90)">AQI</text>
</svg></div>

<div id="cc" class="abs">
 <div id="cch">
  <div style="position:absolute;left:0;width:185px;top:5px;font-size:11px;line-height:13px">Current Conditions</div>
  <div style="position:absolute;left:0;width:185px;top:23px;font-size:9.5px;line-height:11px">observed at</div>
  <div style="position:absolute;left:0;width:185px;top:37px;font-size:11.5px;line-height:13px">Mar 1, 2021 7:00 PM (LT)</div>
 </div>
 <div id="ccg">48 AQI<br>Good<br>PM2.5</div>
 <div id="ccm">
  <div style="position:absolute;left:0;width:185px;top:8px;text-align:center;font-weight:bold;font-size:9px;line-height:11px">Health Message</div>
  <div style="position:absolute;left:4px;width:182px;top:25px;font-size:9px;line-height:15.9px">The AQI value for your community is<br>between 0 and 50. Air quality is satisfactory<br>and poses little or no health risk.</div>
 </div>
</div>
</body></html>
